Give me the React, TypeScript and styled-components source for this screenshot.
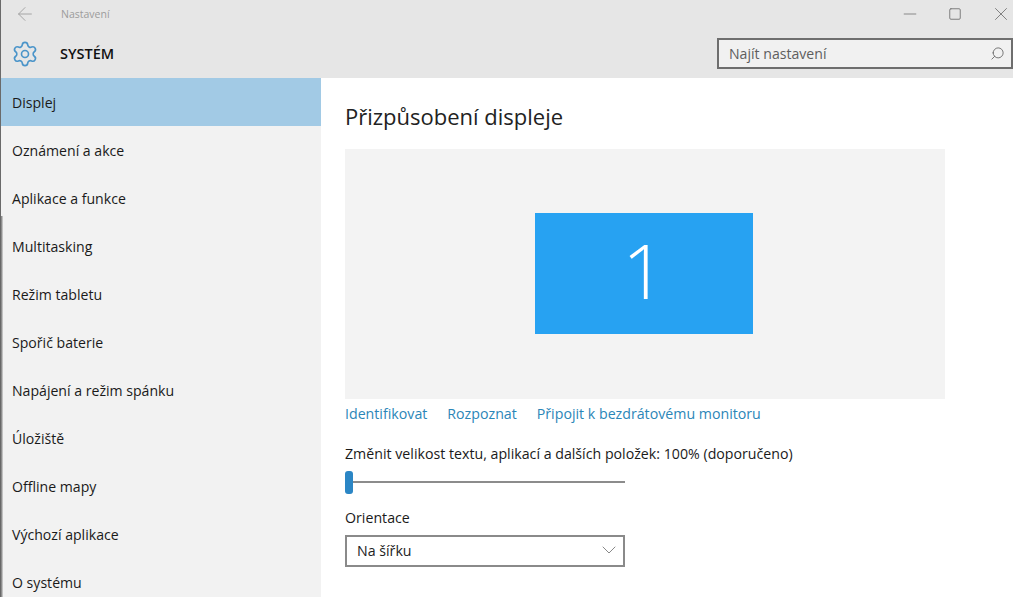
import React from "react";
import styled, { createGlobalStyle } from "styled-components";
import { ArrowLeft, Minus, Square, X, Search, ChevronDown, Settings } from "lucide-react";

const menuItems = [
    "Displej",
    "Oznámení a akce",
    "Aplikace a funkce",
    "Multitasking",
    "Režim tabletu",
    "Spořič baterie",
    "Napájení a režim spánku",
    "Úložiště",
    "Offline mapy",
    "Výchozí aplikace",
    "O systému",
];

const GlobalStyle = createGlobalStyle`
    html, body {
        margin: 0;
        padding: 0;
        height: 597px;
        overflow: hidden;
        background: #fff;
    }
    body {
        font-family: "Open Sans", "Noto Sans", "Liberation Sans", sans-serif;
        color: #1a1a1a;
    }
`;

const Window = styled.div`
    position: relative;
    width: 1013px;
    height: 597px;
    overflow: hidden;
    background: #fff;
`;

const EdgeShadow = styled.div`
    position: absolute;
    left: 0;
    top: 0;
    width: 3px;
    height: 597px;
    background: linear-gradient(to right, #6a6a6a 0 1px, transparent 1px);
    &::after {
        content: "";
        position: absolute;
        left: 0;
        top: 216px;
        width: 3px;
        height: 381px;
        background: linear-gradient(to right, #555, #999 60%, #ddd);
    }
`;

const Header = styled.header`
    height: 78px;
    background: #e6e6e6;
    box-sizing: border-box;
`;

const TitleBar = styled.div`
    height: 28px;
    display: flex;
    align-items: center;
    padding-left: 14px;
    color: #a0a0a0;
`;

const TitleText = styled.span`
    margin-left: 25px;
    font-size: 10.5px;
    color: #9c9c9c;
`;

const WindowButtons = styled.div`
    margin-left: auto;
    display: flex;
    align-items: center;
    gap: 28px;
    padding-right: 1px;
    color: #777;
`;

const HeaderRow = styled.div`
    height: 50px;
    display: flex;
    align-items: flex-start;
    padding-left: 11px;
`;

const SystemName = styled.div`
    margin: 16px 0 0 21px;
    font-size: 14.5px;
    font-weight: 600;
    line-height: 20px;
    color: #111;
`;

const GearIcon = styled(Settings)`
    margin-top: 12px;
    color: #4a94c9;
`;

const SearchBox = styled.div`
    margin: 10px 0 0 auto;
    width: 296px;
    height: 31px;
    box-sizing: border-box;
    border: 2px solid #6e6e6e;
    background: #f1f1f1;
    display: flex;
    align-items: center;
    padding: 0 6px 0 10px;
    font-size: 14.1px;
    color: #5e5e5e;
`;

const SearchIcon = styled(Search)`
    margin-left: auto;
    transform: scaleX(-1);
    color: #666;
`;

const Body = styled.div`
    display: flex;
    height: 519px;
`;

const Sidebar = styled.nav`
    width: 321px;
    flex-shrink: 0;
    background: #f2f2f2;
    overflow: hidden;
`;

const MenuItem = styled.div<{ $active?: boolean }>`
    height: 48px;
    display: flex;
    align-items: center;
    padding-left: 12px;
    font-size: 14.1px;
    color: #1a1a1a;
    background: ${(p) => (p.$active ? "#a2cae5" : "transparent")};
`;

const Content = styled.main`
    flex: 1;
    padding: 0 0 0 24px;
`;

const PageTitle = styled.h1`
    margin: 22px 0 17px;
    font-size: 22px;
    font-weight: 400;
    line-height: 32px;
    color: #222;
`;

const Preview = styled.div`
    width: 600px;
    height: 250px;
    background: #f3f3f3;
    display: flex;
    align-items: center;
    justify-content: center;
`;

const Monitor = styled.div`
    width: 218px;
    height: 121px;
    margin: -1px 2px 0 0;
    padding-bottom: 8px;
    box-sizing: border-box;
    background: #27a2f2;
    color: #fff;
    display: flex;
    align-items: center;
    justify-content: center;
    font-size: 76px;
    font-weight: 300;
    line-height: 1;
`;

const Links = styled.div`
    display: flex;
    gap: 20px;
    margin-top: 5px;
    font-size: 14.2px;
    line-height: 20px;
    color: #2b86b8;
`;

const SliderLabel = styled.div`
    margin-top: 20px;
    font-size: 14.2px;
    line-height: 20px;
`;

const SliderTrack = styled.div`
    width: 280px;
    height: 24px;
    margin-top: 6px;
    display: flex;
    align-items: center;
    background: linear-gradient(#8c8c8c, #8c8c8c) no-repeat center / 100% 2px;
`;

const SliderThumb = styled.div`
    width: 8px;
    height: 23px;
    border-radius: 3px;
    background: #2b86c5;
`;

const FieldLabel = styled.div`
    margin-top: 14px;
    font-size: 14.2px;
    line-height: 20px;
`;

const Select = styled.div`
    width: 280px;
    height: 32px;
    margin-top: 7px;
    box-sizing: border-box;
    border: 2px solid #8a8a8a;
    display: flex;
    align-items: center;
    padding: 0 2px 2px 10px;
    font-size: 14.2px;
    color: #222;
`;

const SelectArrow = styled(ChevronDown)`
    margin-left: auto;
    color: #888;
`;

const App = () => {
    return (
        <Window>
            <GlobalStyle />
            <Header>
                <TitleBar>
                    <ArrowLeft size={22} strokeWidth={1} />
                    <TitleText>Nastavení</TitleText>
                    <WindowButtons>
                        <Minus size={20} strokeWidth={1} />
                        <Square size={14} strokeWidth={1.6} />
                        <X size={22} strokeWidth={1} />
                    </WindowButtons>
                </TitleBar>
                <HeaderRow>
                    <GearIcon size={28} strokeWidth={1.4} />
                    <SystemName>SYSTÉM</SystemName>
                    <SearchBox>
                        Najít nastavení
                        <SearchIcon size={15} strokeWidth={1.4} />
                    </SearchBox>
                </HeaderRow>
            </Header>
            <Body>
                <Sidebar>
                    {menuItems.map((item, i) => (
                        <MenuItem key={item} $active={i === 0}>
                            {item}
                        </MenuItem>
                    ))}
                </Sidebar>
                <Content>
                    <PageTitle>Přizpůsobení displeje</PageTitle>
                    <Preview>
                        <Monitor>1</Monitor>
                    </Preview>
                    <Links>
                        <span>Identifikovat</span>
                        <span>Rozpoznat</span>
                        <span>Připojit k bezdrátovému monitoru</span>
                    </Links>
                    <SliderLabel>Změnit velikost textu, aplikací a dalších položek: 100% (doporučeno)</SliderLabel>
                    <SliderTrack>
                        <SliderThumb />
                    </SliderTrack>
                    <FieldLabel>Orientace</FieldLabel>
                    <Select>
                        Na šířku
                        <SelectArrow size={24} strokeWidth={1} />
                    </Select>
                </Content>
            </Body>
            <EdgeShadow />
        </Window>
    );
};

export default App;
